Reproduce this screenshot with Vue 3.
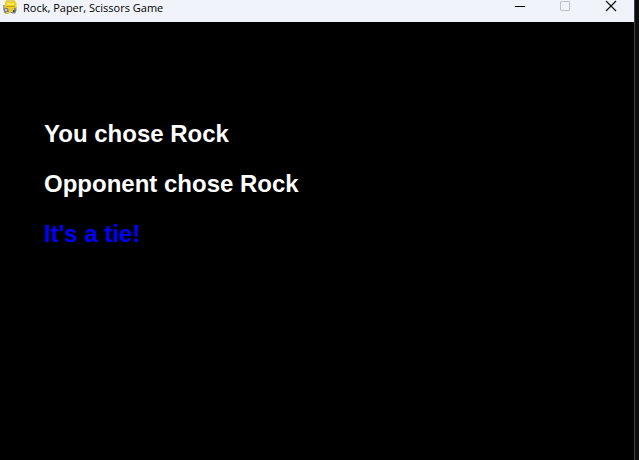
<script setup>
const title = 'Rock, Paper, Scissors Game'
const player = 'Rock'
const opponent = 'Rock'
const result = "It's a tie!"
</script>

<template>
  <div class="desktop">
    <div class="window">
      <header class="titlebar">
        <svg class="logo" width="16" height="15" viewBox="0 0 16 15" aria-hidden="true">
          <path d="M1 5h3v5l1 3H2.500L1 10z" fill="#a9aa9c" />
          <path d="M12 7h2.500v4L12 13z" fill="#8e8f84" />
          <path d="M3 2 4.500 0h7.500L14.500 3v4l-2 2H5L3 7z" fill="#f0d01c" />
          <path d="M6 0h4v2H6z" fill="#d9cf86" />
          <path d="M5 3h7v2H5z" fill="#fbe95a" />
          <path d="M4 6h9v1H4z" fill="#c2a312" />
          <path d="M2 8h4l1 1h3l1-1h3v4l-1 1.500h-3L8 12l-2 1.500H3L2 12z" fill="#85867b" />
          <path d="M6 8h6v2l-2 2H7z" fill="#e5ca2a" />
          <path d="M3 9h2v2H3z" fill="#c9c8bd" />
          <path d="M11 10h2v2h-2z" fill="#5e5f57" />
          <path d="M4 12h3v2H4z" fill="#d8c541" />
        </svg>
        <h1 class="title">{{ title }}</h1>
        <div class="controls">
          <button type="button" class="control" aria-label="Minimize">
            <svg width="12" height="12" viewBox="0 0 12 12"><path d="M2 6.500h10" stroke="#000" /></svg>
          </button>
          <button type="button" class="control" aria-label="Maximize" disabled>
            <svg width="12" height="12" viewBox="0 0 12 12"><rect x="1.500" y="1.500" width="9" height="9" rx="0.500" fill="none" stroke="#bfc1c6" /></svg>
          </button>
          <button type="button" class="control" aria-label="Close">
            <svg width="12" height="12" viewBox="0 0 12 12"><path d="M1 1l10 10M11 1L1 11" stroke="#111" stroke-width="1.200" /></svg>
          </button>
        </div>
      </header>
      <main class="game">
        <p class="line">You chose {{ player }}</p>
        <p class="line">Opponent chose {{ opponent }}</p>
        <p class="line result">{{ result }}</p>
      </main>
    </div>
  </div>
</template>

<style>
body {
  margin: 0;
  background: #0b0c0e;
}
</style>

<style scoped>
.desktop {
  display: flex;
  min-height: 100vh;
  padding-right: 4px;
  background: #0b0c0e;
}
.window {
  display: flex;
  flex: 1;
  flex-direction: column;
  border-right: 1px solid #444;
  background: #000;
}
.titlebar {
  display: flex;
  height: 22px;
  padding-left: 2px;
  background: #f0f3f9;
}
.logo {
  flex: none;
}
.title {
  flex: 1;
  margin: 0;
  padding-left: 5px;
  color: #000;
  font: 400 11px/15px "Open Sans", "Noto Sans", sans-serif;
  white-space: nowrap;
}
.controls {
  display: flex;
}
.control {
  display: flex;
  justify-content: center;
  width: 46px;
  height: 22px;
  padding: 0;
  border: 0;
  background: transparent;
}
.game {
  padding: 96px 44px;
}
.line {
  margin: 0;
  color: #fff;
  font: 700 24px/32px "Liberation Sans", Arial, sans-serif;
}
.line + .line {
  margin-top: 18px;
}
.result {
  color: #00f;
}
</style>
